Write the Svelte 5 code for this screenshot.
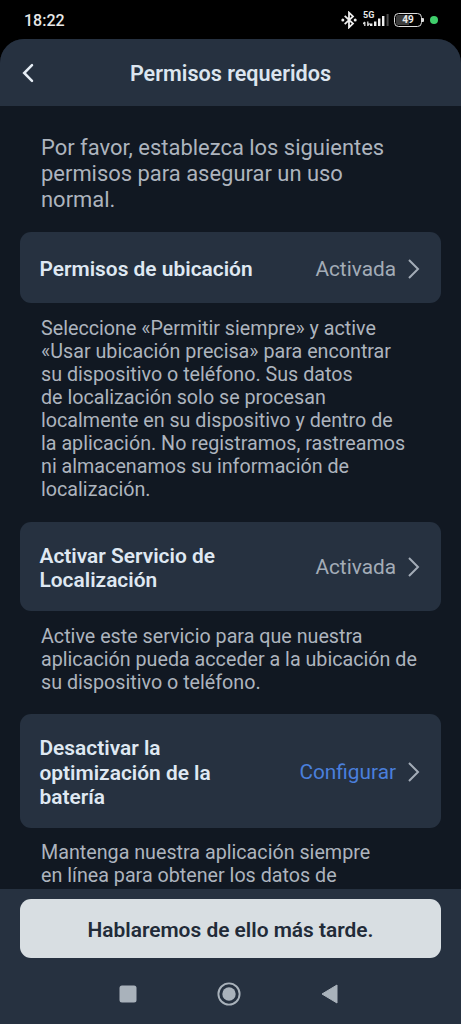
<script lang="ts">
  type Permission = {
    title: string;
    status: string;
    pending?: boolean;
    help: string;
  };

  const time = "18:22";
  const battery = 49;

  const permissions: Permission[] = [
    {
      title: "Permisos de ubicación",
      status: "Activada",
      help: "Seleccione «Permitir siempre» y active\n«Usar ubicación precisa» para encontrar\nsu dispositivo o teléfono. Sus datos\nde localización solo se procesan\nlocalmente en su dispositivo y dentro de\nla aplicación. No registramos, rastreamos\nni almacenamos su información de\nlocalización.",
    },
    {
      title: "Activar Servicio de\nLocalización",
      status: "Activada",
      help: "Active este servicio para que nuestra\naplicación pueda acceder a la ubicación de\nsu dispositivo o teléfono.",
    },
    {
      title: "Desactivar la\noptimización de la\nbatería",
      status: "Configurar",
      pending: true,
      help: "Mantenga nuestra aplicación siempre\nen línea para obtener los datos de",
    },
  ];
</script>

<div class="phone">
  <div class="status-bar">
    <span class="time">{time}</span>
    <div class="indicators">
      <svg width="16" height="18" viewBox="0 0 16 18">
        <path d="M3.7 4.8 12 12.6 8 16.4V1.6l4 3.8-8.3 7.8" fill="none" stroke="#eee" stroke-width="1.8" />
        <circle cx="1.8" cy="9" r="1.5" fill="#eee" />
        <circle cx="14.2" cy="9" r="1.5" fill="#eee" />
      </svg>
      <div class="signal">
        <span class="network">5G</span>
        <svg width="26" height="15" viewBox="0 0 26 15">
          <path d="M1.8 14v-4M0 12l1.8-2M4.8 9.5v4.5M4.8 13.5l1.8-2" stroke="#ddd" stroke-width="1.3" fill="none" />
          <path d="M8.2 14v-2.5M12.2 14V9.5M16.2 14V6.5M20.2 14V4" stroke="#eee" stroke-width="2.4" />
          <path d="M24.6 14V2" stroke="#4a4a4a" stroke-width="2" />
        </svg>
      </div>
      <div class="battery">
        <div class="cell">
          <div class="charge" style="width: {battery}%"></div>
          <span>{battery}</span>
        </div>
        <div class="tip"></div>
      </div>
      <div class="privacy-dot"></div>
    </div>
  </div>

  <div class="screen">
    <header>
      <button class="back" aria-label="Atrás">
        <svg width="12" height="20" viewBox="0 0 12 20">
          <path d="M10 2.2 2.2 10l7.8 7.8" fill="none" stroke="#e6edf5" stroke-width="2.5" stroke-linecap="round" />
        </svg>
      </button>
      <h1>Permisos requeridos</h1>
    </header>

    <main>
      <p class="intro">{"Por favor, establezca los siguientes\npermisos para asegurar un uso\nnormal."}</p>

      {#each permissions as p}
        <button class="card">
          <span class="title">{p.title}</span>
          <span class="status" class:pending={p.pending}>{p.status}</span>
          <svg width="13" height="22" viewBox="0 0 13 22">
            <path d="M1 2 10 11l-9 9" fill="none" stroke="#a3acb7" stroke-width="2" />
          </svg>
        </button>
        <p class="help">{p.help}</p>
      {/each}
    </main>

    <footer>
      <button class="later">Hablaremos de ello más tarde.</button>
      <nav>
        <svg width="18" height="18" viewBox="0 0 18 18">
          <rect x="0.5" y="0.5" width="17" height="17" rx="2.5" fill="#a9b2bb" />
        </svg>
        <svg width="24" height="24" viewBox="0 0 24 24">
          <circle cx="12" cy="12" r="10.6" fill="none" stroke="#a9b2bb" stroke-width="1.9" />
          <circle cx="12" cy="12" r="6.7" fill="#a9b2bb" />
        </svg>
        <svg width="17" height="20" viewBox="0 0 17 20">
          <path d="M1 10 16 1v18z" fill="#a9b2bb" stroke="#a9b2bb" stroke-linejoin="round" />
        </svg>
      </nav>
    </footer>
  </div>
</div>

<style>
  :global(body) {
    margin: 0;
    background: #000;
  }
  .phone {
    display: flex;
    flex-direction: column;
    width: 461px;
    height: 1024px;
    overflow: hidden;
    background: #000;
    font-family: Roboto, "Liberation Sans", sans-serif;
  }
  button {
    border: 0;
    padding: 0;
    margin: 0;
    font: inherit;
    text-align: left;
  }
  svg {
    display: block;
    flex: none;
  }

  .status-bar {
    display: flex;
    align-items: center;
    justify-content: space-between;
    flex: none;
    height: 39px;
    padding: 0 23px 0 24px;
    box-sizing: border-box;
    color: #e8e8e8;
  }
  .time {
    font-size: 16px;
    font-weight: 500;
    padding-top: 2px;
  }
  .indicators {
    display: flex;
    align-items: center;
  }
  .signal {
    position: relative;
    margin: 0 5px 0 6px;
  }
  .network {
    position: absolute;
    left: 0;
    top: -2px;
    font-size: 9px;
    line-height: 10px;
    font-weight: 700;
  }
  .battery {
    display: flex;
    align-items: center;
  }
  .cell {
    position: relative;
    display: flex;
    align-items: center;
    justify-content: center;
    width: 28px;
    height: 14px;
    box-sizing: border-box;
    border: 1.5px solid #ddd;
    border-radius: 4.5px;
    overflow: hidden;
    font-size: 10px;
    font-weight: 700;
  }
  .cell span {
    position: relative;
  }
  .charge {
    position: absolute;
    left: 1px;
    top: 1px;
    bottom: 1px;
    background: #3c3c3c;
    border-radius: 2px 0 0 2px;
  }
  .tip {
    width: 2px;
    height: 4px;
    background: #ddd;
    border-radius: 0 1px 1px 0;
  }
  .privacy-dot {
    width: 8px;
    height: 8px;
    margin-left: 6px;
    border-radius: 50%;
    background: #3fce6b;
  }

  .screen {
    display: flex;
    flex-direction: column;
    flex: 1;
    min-height: 0;
    background: #111822;
    border-radius: 24px 24px 0 0;
    overflow: hidden;
  }
  header {
    display: grid;
    grid-template-columns: 60px 1fr 60px;
    align-items: center;
    flex: none;
    height: 67px;
    background: #263140;
  }
  .back {
    background: none;
    padding-left: 22px;
  }
  h1 {
    margin: 0;
    padding-top: 1px;
    font-size: 21.6px;
    font-weight: 600;
    text-align: center;
    color: #dce5ef;
  }

  main {
    flex: 1;
    min-height: 0;
    overflow: hidden;
    padding: 29px 20px 0;
  }
  .intro,
  .help {
    margin: 0 0 0 21px;
    white-space: pre;
    color: #adb4be;
  }
  .intro {
    font-size: 21.95px;
    line-height: 25.8px;
    margin-bottom: 20px;
  }
  .card {
    display: flex;
    align-items: center;
    width: 100%;
    box-sizing: border-box;
    min-height: 71px;
    padding: 21px 20px 19px 19.5px;
    border-radius: 11px;
    background: #263140;
  }
  .title {
    flex: 1;
    padding-top: 1px;
    white-space: pre;
    font-size: 20.9px;
    line-height: 24.2px;
    font-weight: 600;
    color: #dfe8f2;
  }
  .status {
    margin-right: 12px;
    font-size: 20.8px;
    color: #a3acb7;
  }
  .status.pending {
    color: #4a7fdc;
  }
  .help {
    padding: 13.5px 0 20.5px;
    font-size: 19.72px;
    line-height: 23.05px;
  }

  footer {
    flex: none;
    height: 135px;
    box-sizing: border-box;
    padding: 10px 20px 0;
    background: #263140;
  }
  .later {
    display: block;
    width: 100%;
    height: 59px;
    padding-top: 2px;
    border-radius: 11px;
    background: #d8dee2;
    color: #222b38;
    font-size: 20.9px;
    font-weight: 600;
    text-align: center;
  }
  nav {
    display: flex;
    align-items: center;
    justify-content: space-between;
    height: 24px;
    padding: 0 103px 0 99px;
    margin-top: 24px;
  }
</style>
